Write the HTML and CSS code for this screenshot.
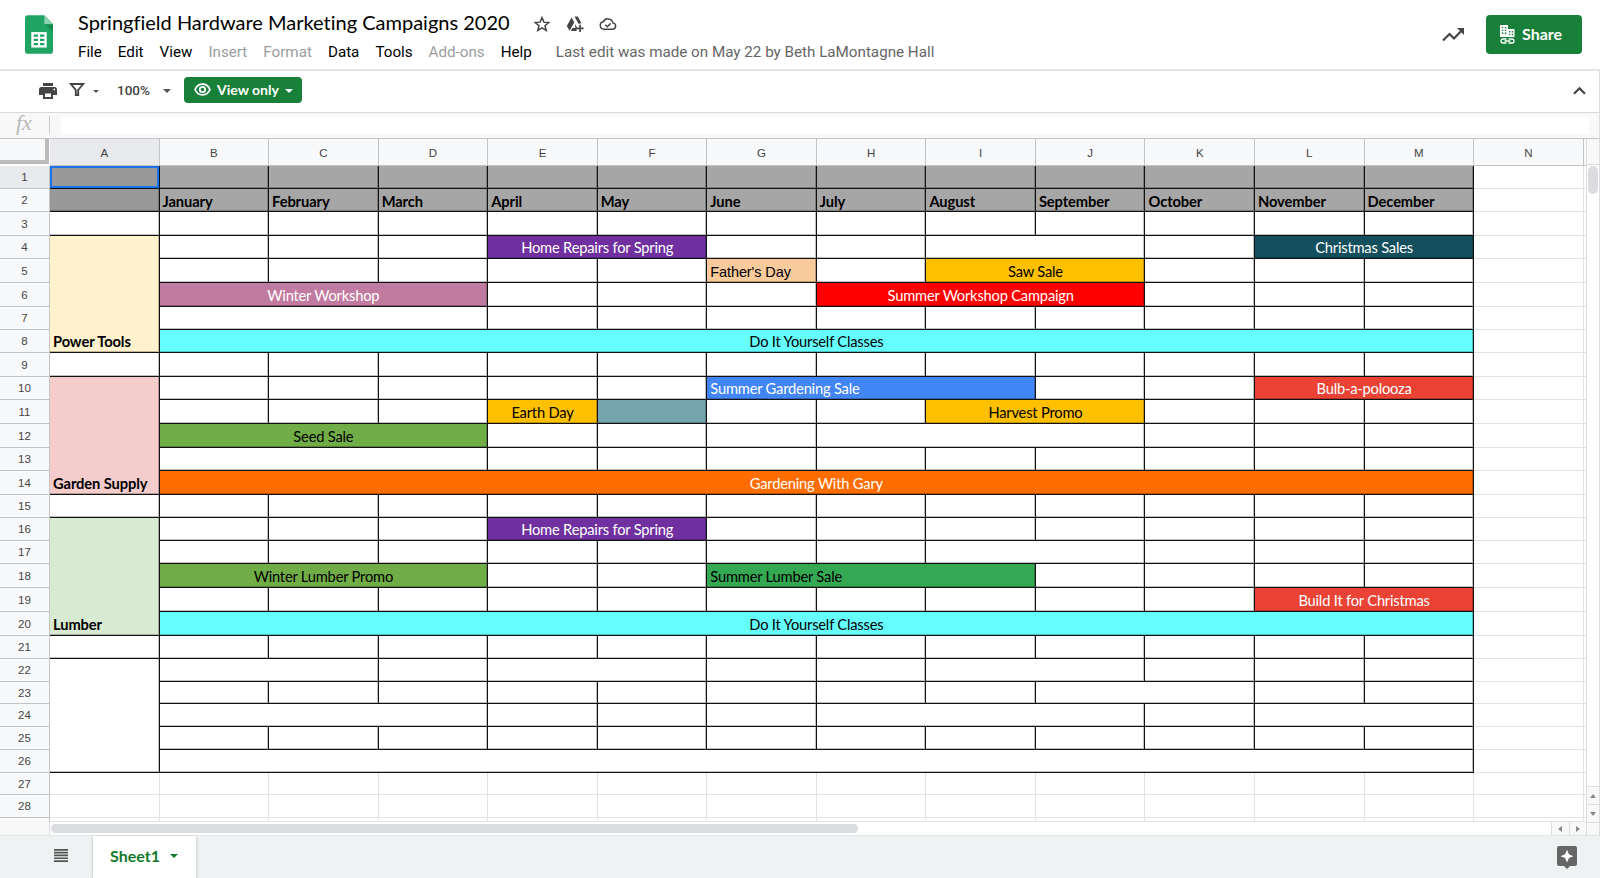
FILE: index.html
```html
<!DOCTYPE html>
<html lang="en">
<head>
    <meta charset="UTF-8">
    <title>Springfield Hardware Marketing Campaigns 2020</title>
    <link rel="stylesheet" href="styles.css">
</head>
<body>
    <header class="topbar">
        <svg class="logo" width="28" height="39" viewBox="0 0 29 40">
            <path d="M3 0h17l9 9v28a3 3 0 0 1-3 3H3a3 3 0 0 1-3-3V3a3 3 0 0 1 3-3z" fill="#1fa463"/>
            <path d="M20 0v9h9z" fill="#8ed1b1"/>
            <path d="M21 10h8v7z" fill="#17894f"/>
            <path d="M6.500 17.500h16v16h-16z" fill="#fff"/>
            <path d="M9 20h4.500v2.300H9zM15.500 20H20v2.300h-4.500zM9 24.400h4.500v2.300H9zM15.500 24.400H20v2.300h-4.500zM9 28.800h4.500v2.300H9zM15.500 28.800H20v2.300h-4.500z" fill="#1fa463"/>
        </svg>
        <div class="doc">
            <div class="title-row">
                <h1>Springfield Hardware Marketing Campaigns 2020</h1>
                <svg width="18" height="18" viewBox="0 0 24 24" fill="none" stroke="#444" stroke-width="2"><path d="M12 3.500l2.500 6 6.500.500-5 4.200 1.600 6.300-5.600-3.400-5.600 3.400L8 14.200 3 10l6.500-.500z"/></svg>
                <svg width="18" height="18" viewBox="0 0 18 18" fill="#444">
                    <path d="M6.300 1.500h5.400l3.800 6.800a5 5 0 0 0-2.800.600L8.500 1.600zM5.600 2.600l2.700 4.800-4.800 8.300L.800 11zM8.900 8.900l2 3.400-.3 3.700H4.800l1.600-2.900h3z"/>
                    <path d="M13.200 9.800h1.700v2.700h2.700v1.700h-2.700v2.700h-1.700v-2.700h-2.700v-1.700h2.700z"/>
                </svg>
                <svg width="18" height="18" viewBox="0 0 24 24" fill="none" stroke="#444" stroke-width="2"><path d="M6.500 19a5 5 0 0 1-.8-9.900 6.800 6.800 0 0 1 12.800 1.400A4.300 4.300 0 0 1 18.500 19z"/><path d="M8.500 13l2.600 2.600 4.400-4.400"/></svg>
            </div>
            <nav class="menu">
                <span>File</span>
                <span>Edit</span>
                <span>View</span>
                <span class="off">Insert</span>
                <span class="off">Format</span>
                <span>Data</span>
                <span>Tools</span>
                <span class="off">Add-ons</span>
                <span>Help</span>
                <span class="last-edit">Last edit was made on May 22 by Beth LaMontagne Hall</span>
            </nav>
        </div>
        <svg class="trend" width="22" height="14" viewBox="0 0 22 14" fill="none" stroke="#444" stroke-width="2.200"><path d="M1 12.500l6.500-6.500 4.500 4.500L20 2.300"/><path d="M15 0h7v7z" fill="#444" stroke="none"/></svg>
        <button class="share">
            <svg width="15" height="19" viewBox="0 0 15 19">
                <path d="M0 0h8v4h6.500v8H0z" fill="#fff"/>
                <path d="M1.800 2h1.500v1.300H1.800zM4.800 2h1.500v1.300H4.800zM1.800 4.800h1.500v1.300H1.800zM4.800 4.800h1.500v1.300H4.800zM1.800 7.600h1.500v1.300H1.800zM4.800 7.600h1.500v1.300H4.800zM9 6h1.300v1.500H9zM11.700 6H13v1.500h-1.300zM9 8.800h1.300v1.400H9zM11.700 8.800H13v1.400h-1.300z" fill="#188038"/>
                <path d="M6.500 14H3a2 2 0 0 0 0 4h3.500M8.500 14H12a2 2 0 0 1 0 4H8.500M4.500 16h6" fill="none" stroke="#fff" stroke-width="1.300"/>
            </svg>
            <span>Share</span>
        </button>
    </header>

    <div class="toolbar">
        <svg class="print" width="18" height="16" viewBox="0 0 18 16" fill="#444"><path d="M4 0h10v3H4z"/><path fill-rule="evenodd" d="M2.500 4h13A2.500 2.500 0 0 1 18 6.500V12h-4V9H4v3H0V6.500A2.500 2.500 0 0 1 2.500 4zM14.500 5.800v1.500H16V5.800z"/><path fill-rule="evenodd" d="M4 9h10v7H4zM6 10.500v3.500h6v-3.500z"/></svg>
        <svg class="filter" width="16" height="13" viewBox="0 0 16 13"><path d="M1.800 1h12.400L9.200 7v5H6.800V7z" fill="none" stroke="#444" stroke-width="1.900"/></svg>
        <i class="caret small"></i>
        <span class="zoom">100%</span>
        <i class="caret"></i>
        <button class="view-only">
            <svg width="17" height="13" viewBox="0 0 17 13" fill="none" stroke="#fff"><path d="M1.100 6.500C2.500 3 5.200 1.100 8.500 1.100S14.500 3 15.900 6.500C14.500 10 11.800 11.900 8.500 11.900S2.500 10 1.100 6.500z" stroke-width="1.800"/><circle cx="8.500" cy="6.500" r="2.700" stroke-width="1.800"/></svg>
            <span>View only</span>
            <i class="caret"></i>
        </button>
        <svg class="chevron" width="13" height="9" viewBox="0 0 13 9" fill="none" stroke="#444" stroke-width="2.200"><path d="M1 7.800l5.500-5.500L12 7.800"/></svg>
    </div>

    <div class="formula">
        <span class="fx">fx</span>
        <div class="formula-input"></div>
    </div>

    <main class="workspace">
        <div class="sheet" id="sheet"></div>
        <div class="vscroll">
            <div class="vtop"></div>
            <div class="vthumb"></div>
            <div class="arrow"><i class="up"></i></div>
            <div class="arrow"><i class="down"></i></div>
        </div>
    </main>

    <div class="hscroll">
        <div class="hleft"></div>
        <div class="hthumb"></div>
        <div class="arrow"><i class="left"></i></div>
        <div class="arrow"><i class="right"></i></div>
        <div class="hcorner"></div>
    </div>

    <footer class="tabs">
        <svg class="all-sheets" width="14" height="13" viewBox="0 0 14 13" fill="#555"><path d="M0 0h14v1.700H0zM0 2.800h14v1.700H0zM0 5.600h14v1.700H0zM0 8.400h14v1.700H0zM0 11.200h14v1.700H0z"/></svg>
        <div class="tab"><span>Sheet1</span><i class="caret"></i></div>
        <svg class="explore" width="20" height="23" viewBox="0 0 20 23"><path d="M2 0h16a2 2 0 0 1 2 2v16a2 2 0 0 1-2 2h-5l-3 3-3-3H2a2 2 0 0 1-2-2V2a2 2 0 0 1 2-2z" fill="#666"/><path d="M10 3.800l1.900 4.500 4.500 1.900-4.500 1.900-1.900 4.500-1.900-4.500-4.500-1.900 4.500-1.900z" fill="#fff"/></svg>
    </footer>

    <script src="sheet.js"></script>
</body>
</html>
```
FILE: styles.css
```css
* {
    box-sizing: border-box;
}
body {
    margin: 0;
    width: 1600px;
    height: 878px;
    overflow: hidden;
    display: flex;
    flex-direction: column;
    background: #fff;
    font-family: Roboto, "Liberation Sans", sans-serif;
}
button {
    border: none;
    border-radius: 4px;
    background: #188038;
    color: #fff;
    display: flex;
    align-items: center;
    font-family: Lato, sans-serif;
    font-weight: bold;
}
svg {
    flex: none;
    display: block;
}

/* header */
.topbar {
    height: 71px;
    flex: none;
    display: flex;
    border-bottom: 2px solid #e3e3e3;
}
.logo {
    margin: 15px 0 0 25px;
}
.doc {
    margin-left: 25px;
    flex: 1;
}
.title-row {
    display: flex;
    align-items: center;
    height: 26px;
    margin-top: 11px;
    gap: 15px;
}
h1 {
    margin: -4px 8px 0 0;
    font: 400 20px/26px Lato, sans-serif;
    font-variant-ligatures: none;
    width: 432px;
    white-space: nowrap;
    color: #000;
}
.menu {
    display: flex;
    gap: 16px;
    margin-top: 6px;
    font-size: 15.200px;
    line-height: 18px;
    white-space: nowrap;
    color: #000;
}
.menu .off {
    color: #9a9da1;
}
.menu .last-edit {
    margin-left: 8px;
    color: #666;
}
.trend {
    margin: 28px 22px 0 0;
}
.share {
    width: 96px;
    height: 39px;
    margin: 15px 18px 0 0;
    padding: 0 0 1px 14px;
    gap: 7px;
    font-size: 16px;
}
.share span {
    margin-top: -1px;
}

/* toolbar */
.toolbar {
    height: 42px;
    flex: none;
    display: flex;
    align-items: center;
    padding: 0 13px 4px 39px;
    border-bottom: 1px solid #dadada;
    border-right: 1px solid #ddd;
}
.print {
    margin-top: 2px;
}
.filter {
    margin-left: 12px;
}
.caret {
    border: 4px solid transparent;
    border-top-color: #555;
    border-bottom: none;
    margin-top: 2px;
}
.caret.small {
    border-width: 3px 3px 0;
    margin: 4px 0 0 8px;
}
.zoom {
    margin: 0 14px 0 18px;
    font-size: 13.500px;
    font-weight: 500;
    color: #444;
    width: 32px;
}
.view-only {
    width: 118px;
    height: 26px;
    margin-left: 13px;
    padding: 0 0 0 10px;
    font-size: 14px;
}
.view-only span {
    margin: -1px 8px 0 6px;
    width: 60px;
    text-align: left;
    white-space: nowrap;
}
.view-only .caret {
    border-top-color: #fff;
}
.chevron {
    margin: 2px 0 0 auto;
}

/* formula bar */
.formula {
    height: 26px;
    flex: none;
    display: flex;
    background: #f8f8f8;
    border-bottom: 1px solid #c4c4c4;
    border-right: 1px solid #ddd;
}
.fx {
    width: 50px;
    height: 18px;
    margin-top: 3px;
    padding-left: 16px;
    border-right: 1px solid #ccc;
    font: italic 22px/13px "Liberation Serif", serif;
    color: #b9b9b9;
}
.formula-input {
    width: 1528px;
    height: 17px;
    margin: 4px 0 0 11px;
    background: #fff;
}

/* grid */
.workspace {
    height: 683px;
    flex: none;
    display: flex;
}
.sheet {
    width: 1586px;
    overflow: hidden;
    display: grid;
    grid-template-columns: 50px repeat(14, 109.560px) 3px;
    font: 14.700px/22px Lato, sans-serif;
    letter-spacing: -0.200px;
    color: #000;
}
.corner {
    background: #f8f9fa;
    border: solid #bbb;
    border-width: 0 4px 4px 0;
    margin: 0 1px 2px 0;
}
.col-head,
.row-head {
    display: flex;
    align-items: center;
    justify-content: center;
    background: #f8f9fa;
    border: solid #c4c4c4;
    border-width: 0 1px 1px 0;
    font: 11.500px "Liberation Sans", sans-serif;
    letter-spacing: 0;
    color: #444;
}
.col-head {
    padding-top: 1px;
}
.row-head.short {
    border-bottom: none;
}
.picked {
    background: #e8eaed;
}
.cell {
    display: flex;
    align-items: flex-end;
    padding: 0 3px;
    border: solid #111;
    border-width: 0 1px 1px 0;
    box-shadow: inset -1px -1px 0 rgba(0,0,0,0.25);
    white-space: nowrap;
    min-width: 0;
}
.cell.blank {
    border-color: #e2e3e3;
    box-shadow: none;
}
.center { justify-content: center; }
.bold {
    font-weight: bold;
    letter-spacing: -0.100px;
}
.light { color: #fff; }
.gray {
    background: #a6a6a6;
    line-height: 20px;
}
.dark-gray { background: #999; }
.cell.selected {
    box-shadow: inset 0 0 0 2px #1a73e8;
}
.cream { background: #fff2cc; }
.pink { background: #f4cccc; }
.mint { background: #d9ead3; }
.purple { background: #7030a0; }
.navy { background: #134f5c; }
.peach {
    background: #f9cb9c;
    font: 14.500px/20px "Liberation Sans", sans-serif;
    letter-spacing: -0.100px;
}
.gold { background: #ffc000; }
.mauve { background: #c27ba0; }
.red { background: #f00; }
.cyan { background: #6ff; }
.blue { background: #4285f4; }
.coral { background: #ea4335; }
.teal { background: #76a5af; }
.green { background: #70ad47; }
.orange { background: #ff6d01; }
.emerald { background: #34a853; }

/* scrollbars */
.vscroll {
    width: 14px;
    border: solid #ddd;
    border-width: 0 1px;
    display: flex;
    flex-direction: column;
}
.vtop {
    height: 26px;
    background: #f8f8f8;
    border-bottom: 1px solid #ddd;
}
.vthumb {
    width: 10px;
    height: 28px;
    margin: 1px 1px auto;
    border-radius: 5px;
    background: #dadce0;
}
.arrow {
    display: flex;
    align-items: center;
    justify-content: center;
    background: #f8f8f8;
}
.vscroll .arrow {
    height: 18px;
    border-top: 1px solid #ddd;
}
.arrow i {
    border: 3px solid transparent;
}
.arrow .up { border-bottom: 4px solid #888; border-top: none; }
.arrow .down { border-top: 4px solid #888; border-bottom: none; }
.arrow .left { border-right: 4px solid #888; border-left: none; }
.arrow .right { border-left: 4px solid #888; border-right: none; }
.hscroll {
    height: 13px;
    flex: none;
    display: flex;
}
.hleft {
    width: 50px;
    background: #f8f8f8;
    border-right: 1px solid #ddd;
}
.hthumb {
    width: 807px;
    height: 9px;
    margin: 2px auto 0 1px;
    border-radius: 5px;
    background: #dadce0;
}
.hscroll .arrow {
    width: 17.500px;
    border-left: 1px solid #ddd;
}
.hcorner {
    width: 14px;
    background: #f8f8f8;
    border: 1px solid #ddd;
    border-bottom: none;
}

/* sheet tabs */
.tabs {
    height: 43px;
    flex: none;
    display: flex;
    background: #eef2f3;
    border-top: 1px solid #e3e6e8;
}
.all-sheets {
    margin: 13px 25px 0 54px;
}
.tab {
    width: 103px;
    padding: 0 0 3px 17px;
    display: flex;
    align-items: center;
    background: #fff;
    box-shadow: 0 1px 3px rgba(0,0,0,0.25);
    font: bold 16px Lato, sans-serif;
    color: #137a2a;
}
.tab .caret {
    margin: 1px 0 0 10px;
    border-top-color: #137a2a;
}
.tab span {
    width: 50px;
}
.explore {
    margin: 10px 23px 0 auto;
}
```
FILE: sheet.js
```js
const sheet = document.getElementById('sheet');
const months = ['January', 'February', 'March', 'April', 'May', 'June', 'July',
    'August', 'September', 'October', 'November', 'December'];

// pixel height of each row, the last one is cut off by the scrollbar
const heights = [23, 23, 24, 23, 24, 24, 23, 23, 24, 23, 24, 24, 23, 24,
    23, 23, 23, 24, 24, 24, 23, 23, 22, 23, 23, 23, 22, 23, 4];
sheet.style.gridTemplateRows = '27px ' + heights.map(h => h + 'px').join(' ');

// merged ranges: row, first column, last column, classes, text
const merges = [
    [4, 'E', 'F', 'purple light center', 'Home Repairs for Spring'],
    [4, 'I', 'J', '', ''],
    [4, 'L', 'M', 'navy light center', 'Christmas Sales'],
    [5, 'G', 'G', 'peach', "Father's Day"],
    [5, 'I', 'J', 'gold center', 'Saw Sale'],
    [6, 'B', 'D', 'mauve light center', 'Winter Workshop'],
    [6, 'H', 'J', 'red light center', 'Summer Workshop Campaign'],
    [7, 'B', 'D', '', ''],
    [8, 'B', 'M', 'cyan center', 'Do It Yourself Classes'],
    [10, 'G', 'I', 'blue light', 'Summer Gardening Sale'],
    [10, 'L', 'M', 'coral light center', 'Bulb-a-polooza'],
    [11, 'E', 'E', 'gold center', 'Earth Day'],
    [11, 'F', 'F', 'teal', ''],
    [11, 'I', 'J', 'gold center', 'Harvest Promo'],
    [12, 'B', 'D', 'green center', 'Seed Sale'],
    [12, 'H', 'J', '', ''],
    [13, 'B', 'D', '', ''],
    [14, 'B', 'M', 'orange light center', 'Gardening With Gary'],
    [16, 'E', 'F', 'purple light center', 'Home Repairs for Spring'],
    [17, 'I', 'J', '', ''],
    [18, 'B', 'D', 'green center', 'Winter Lumber Promo'],
    [18, 'G', 'I', 'emerald', 'Summer Lumber Sale'],
    [19, 'L', 'M', 'coral light center', 'Build It for Christmas'],
    [20, 'B', 'M', 'cyan center', 'Do It Yourself Classes'],
    [22, 'B', 'C', '', ''],
    [22, 'E', 'F', '', ''],
    [22, 'I', 'J', '', ''],
    [23, 'J', 'K', '', ''],
    [24, 'B', 'D', '', ''],
    [24, 'H', 'J', '', ''],
    [24, 'L', 'M', '', ''],
    [26, 'B', 'M', '', '']
];

// column A: first row, last row, classes, text
const groups = [
    [1, 1, 'dark-gray selected', ''],
    [2, 2, 'dark-gray', ''],
    [3, 3, '', ''],
    [4, 8, 'cream bold', 'Power Tools'],
    [9, 9, '', ''],
    [10, 14, 'pink bold', 'Garden Supply'],
    [15, 15, '', ''],
    [16, 20, 'mint bold', 'Lumber'],
    [21, 21, '', ''],
    [22, 26, '', ''],
    [27, 27, 'blank', ''],
    [28, 28, 'blank', ''],
    [29, 29, 'blank', '']
];

// row 0 and column 0 are the headers
function add(cls, text, row, col, rowEnd, colEnd) {
    const el = document.createElement('div');
    el.className = cls;
    el.style.gridArea = `${row + 1} / ${col + 1} / ${(rowEnd || row) + 2} / ${(colEnd || col) + 2}`;
    if (text) {
        const span = document.createElement('span');
        span.textContent = text;
        el.appendChild(span);
    }
    sheet.appendChild(el);
}

const colNumber = letter => letter.charCodeAt(0) - 64;

add('corner', '', 0, 0);
for (let c = 1; c <= 14; c++) {
    add('col-head' + (c === 1 ? ' picked' : ''), String.fromCharCode(64 + c), 0, c);
}
add('col-head', '', 0, 15);

groups.forEach(([from, to, cls, text]) => add('cell ' + cls, text, from, 1, to));

for (let r = 1; r <= 29; r++) {
    add('row-head' + (r === 1 ? ' picked' : '') + (r === 29 ? ' short' : ''), r < 29 ? String(r) : '', r, 0);
    for (let c = 2; c <= 15; c++) {
        const merge = merges.find(m => m[0] === r && colNumber(m[1]) === c);
        if (merge) {
            const end = colNumber(merge[2]);
            add('cell ' + merge[3], merge[4], r, c, r, end);
            c = end;
        } else if (r > 26 || c > 13) {
            add('cell blank', '', r, c);
        } else if (r <= 2) {
            add('cell gray bold', r === 2 ? months[c - 2] : '', r, c);
        } else {
            add('cell', '', r, c);
        }
    }
}
```
